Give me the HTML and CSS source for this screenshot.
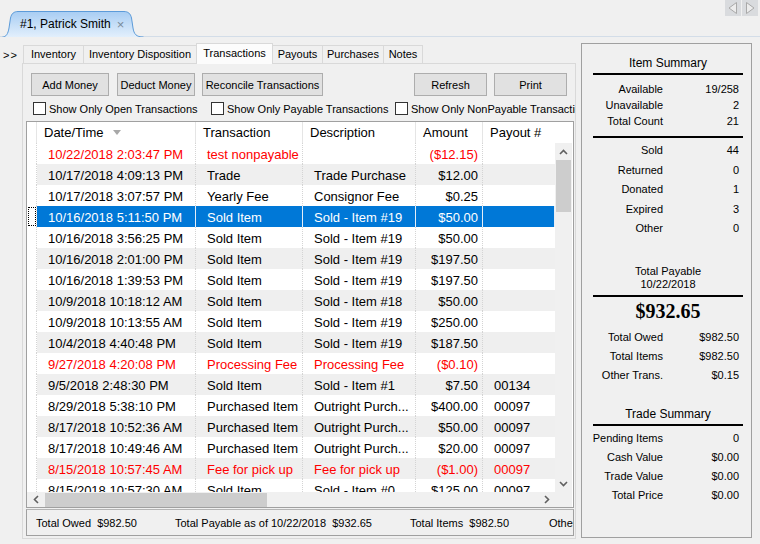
FILE: index.html
```html
<!DOCTYPE html>
<html lang="en">
<head>
    <meta charset="UTF-8">
    <meta name="viewport" content="width=device-width, initial-scale=1.0">
    <title>#1, Patrick Smith - Transactions</title>
    <link rel="stylesheet" href="styles.css">
</head>
<body>
    <div class="topbar">
        <div class="doc-tab">
            <svg class="doc-tab-bg" width="142" height="26" viewBox="0 0 142 26">
                <defs>
                    <linearGradient id="tabfill" x1="0" y1="0" x2="0" y2="1">
                        <stop offset="0" stop-color="#a8cdf3"/>
                        <stop offset="1" stop-color="#e2effc"/>
                    </linearGradient>
                </defs>
                <path d="M0.5 26 C4 26 6 23 7 17 L8.5 7 C9.5 2.5 12 0.5 16 0.5 L122 0.5 C126 0.5 128.5 2.5 129.5 7 L131 17 C132 23 134 26 141.5 26" fill="url(#tabfill)" stroke="#5c9bd9"/>
            </svg>
            <span class="doc-tab-label">#1, Patrick Smith</span>
            <span class="doc-tab-close">×</span>
        </div>
        <div class="nav-arrows">
            <span class="nav-btn">
                <svg width="16" height="16" viewBox="0 0 16 16"><path d="M11.5 2.5 L4 8 L11.5 13.5 Z" fill="#ececec" stroke="#a9a9a9"/></svg>
            </span>
            <span class="nav-btn">
                <svg width="16" height="16" viewBox="0 0 16 16"><path d="M4.5 2.5 L12 8 L4.5 13.5 Z" fill="#ececec" stroke="#a9a9a9"/></svg>
            </span>
        </div>
    </div>

    <div class="workspace">
        <div class="expander">&gt;&gt;</div>

        <div class="tabs">
            <div class="tab-strip">
                <span class="tab w-inv">Inventory</span>
                <span class="tab w-disp">Inventory Disposition</span>
                <span class="tab w-trans active">Transactions</span>
                <span class="tab w-payouts">Payouts</span>
                <span class="tab w-purch">Purchases</span>
                <span class="tab w-notes">Notes</span>
            </div>

            <div class="tab-page">
                <div class="toolbar">
                    <button class="btn w-add">Add Money</button>
                    <button class="btn w-deduct">Deduct Money</button>
                    <button class="btn w-reconcile">Reconcile Transactions</button>
                    <span class="spacer"></span>
                    <button class="btn w-refresh">Refresh</button>
                    <button class="btn w-print">Print</button>
                </div>

                <div class="filters">
                    <label class="check w-open"><span class="box"></span>Show Only Open Transactions</label>
                    <label class="check w-payable"><span class="box"></span>Show Only Payable Transactions</label>
                    <label class="check w-nonpayable"><span class="box"></span>Show Only NonPayable Transactions</label>
                </div>

                <div class="grid">
                    <div class="grid-head">
                        <div class="hc c-sel"></div>
                        <div class="hc c-date">Date/Time <span class="sort-arrow"></span></div>
                        <div class="hc c-type">Transaction</div>
                        <div class="hc c-desc">Description</div>
                        <div class="hc c-amt">Amount</div>
                        <div class="hc c-pay-head">Payout #</div>
                    </div>

                    <div class="grid-body">
                        <div class="rows">
                            <div class="row red">
                                <div class="c c-sel"></div>
                                <div class="c c-date">10/22/2018 2:03:47 PM</div>
                                <div class="c c-type">test nonpayable</div>
                                <div class="c c-desc"></div>
                                <div class="c c-amt">($12.15)</div>
                                <div class="c c-pay"></div>
                            </div>
                            <div class="row alt">
                                <div class="c c-sel"></div>
                                <div class="c c-date">10/17/2018 4:09:13 PM</div>
                                <div class="c c-type">Trade</div>
                                <div class="c c-desc">Trade Purchase</div>
                                <div class="c c-amt">$12.00</div>
                                <div class="c c-pay"></div>
                            </div>
                            <div class="row">
                                <div class="c c-sel"></div>
                                <div class="c c-date">10/17/2018 3:07:57 PM</div>
                                <div class="c c-type">Yearly Fee</div>
                                <div class="c c-desc">Consignor Fee</div>
                                <div class="c c-amt">$0.25</div>
                                <div class="c c-pay"></div>
                            </div>
                            <div class="row selected">
                                <div class="c c-sel"><span class="focus"></span></div>
                                <div class="c c-date">10/16/2018 5:11:50 PM</div>
                                <div class="c c-type">Sold Item</div>
                                <div class="c c-desc">Sold - Item #19</div>
                                <div class="c c-amt">$50.00</div>
                                <div class="c c-pay"></div>
                            </div>
                            <div class="row">
                                <div class="c c-sel"></div>
                                <div class="c c-date">10/16/2018 3:56:25 PM</div>
                                <div class="c c-type">Sold Item</div>
                                <div class="c c-desc">Sold - Item #19</div>
                                <div class="c c-amt">$50.00</div>
                                <div class="c c-pay"></div>
                            </div>
                            <div class="row alt">
                                <div class="c c-sel"></div>
                                <div class="c c-date">10/16/2018 2:01:00 PM</div>
                                <div class="c c-type">Sold Item</div>
                                <div class="c c-desc">Sold - Item #19</div>
                                <div class="c c-amt">$197.50</div>
                                <div class="c c-pay"></div>
                            </div>
                            <div class="row">
                                <div class="c c-sel"></div>
                                <div class="c c-date">10/16/2018 1:39:53 PM</div>
                                <div class="c c-type">Sold Item</div>
                                <div class="c c-desc">Sold - Item #19</div>
                                <div class="c c-amt">$197.50</div>
                                <div class="c c-pay"></div>
                            </div>
                            <div class="row alt">
                                <div class="c c-sel"></div>
                                <div class="c c-date">10/9/2018 10:18:12 AM</div>
                                <div class="c c-type">Sold Item</div>
                                <div class="c c-desc">Sold - Item #18</div>
                                <div class="c c-amt">$50.00</div>
                                <div class="c c-pay"></div>
                            </div>
                            <div class="row">
                                <div class="c c-sel"></div>
                                <div class="c c-date">10/9/2018 10:13:55 AM</div>
                                <div class="c c-type">Sold Item</div>
                                <div class="c c-desc">Sold - Item #19</div>
                                <div class="c c-amt">$250.00</div>
                                <div class="c c-pay"></div>
                            </div>
                            <div class="row alt">
                                <div class="c c-sel"></div>
                                <div class="c c-date">10/4/2018 4:40:48 PM</div>
                                <div class="c c-type">Sold Item</div>
                                <div class="c c-desc">Sold - Item #19</div>
                                <div class="c c-amt">$187.50</div>
                                <div class="c c-pay"></div>
                            </div>
                            <div class="row red">
                                <div class="c c-sel"></div>
                                <div class="c c-date">9/27/2018 4:20:08 PM</div>
                                <div class="c c-type">Processing Fee</div>
                                <div class="c c-desc">Processing Fee</div>
                                <div class="c c-amt">($0.10)</div>
                                <div class="c c-pay"></div>
                            </div>
                            <div class="row alt">
                                <div class="c c-sel"></div>
                                <div class="c c-date">9/5/2018 2:48:30 PM</div>
                                <div class="c c-type">Sold Item</div>
                                <div class="c c-desc">Sold - Item #1</div>
                                <div class="c c-amt">$7.50</div>
                                <div class="c c-pay">00134</div>
                            </div>
                            <div class="row">
                                <div class="c c-sel"></div>
                                <div class="c c-date">8/29/2018 5:38:10 PM</div>
                                <div class="c c-type">Purchased Item</div>
                                <div class="c c-desc">Outright Purch...</div>
                                <div class="c c-amt">$400.00</div>
                                <div class="c c-pay">00097</div>
                            </div>
                            <div class="row alt">
                                <div class="c c-sel"></div>
                                <div class="c c-date">8/17/2018 10:52:36 AM</div>
                                <div class="c c-type">Purchased Item</div>
                                <div class="c c-desc">Outright Purch...</div>
                                <div class="c c-amt">$50.00</div>
                                <div class="c c-pay">00097</div>
                            </div>
                            <div class="row">
                                <div class="c c-sel"></div>
                                <div class="c c-date">8/17/2018 10:49:46 AM</div>
                                <div class="c c-type">Purchased Item</div>
                                <div class="c c-desc">Outright Purch...</div>
                                <div class="c c-amt">$20.00</div>
                                <div class="c c-pay">00097</div>
                            </div>
                            <div class="row alt red">
                                <div class="c c-sel"></div>
                                <div class="c c-date">8/15/2018 10:57:45 AM</div>
                                <div class="c c-type">Fee for pick up</div>
                                <div class="c c-desc">Fee for pick up</div>
                                <div class="c c-amt">($1.00)</div>
                                <div class="c c-pay">00097</div>
                            </div>
                            <div class="row">
                                <div class="c c-sel"></div>
                                <div class="c c-date">8/15/2018 10:57:30 AM</div>
                                <div class="c c-type">Sold Item</div>
                                <div class="c c-desc">Sold - Item #0</div>
                                <div class="c c-amt">$125.00</div>
                                <div class="c c-pay">00097</div>
                            </div>
                        </div>

                        <div class="vscroll">
                            <span class="sb-arrow">
                                <svg width="9" height="6" viewBox="0 0 9 6"><polyline points="1,5 4.5,1.5 8,5" fill="none" stroke="#606060" stroke-width="1.6"/></svg>
                            </span>
                            <span class="vthumb"></span>
                            <span class="spacer"></span>
                            <span class="sb-arrow">
                                <svg width="9" height="6" viewBox="0 0 9 6"><polyline points="1,1 4.5,4.5 8,1" fill="none" stroke="#606060" stroke-width="1.6"/></svg>
                            </span>
                        </div>
                    </div>

                    <div class="grid-foot">
                        <div class="hscroll">
                            <span class="sb-arrow h">
                                <svg width="6" height="9" viewBox="0 0 6 9"><polyline points="5,1 1.5,4.5 5,8" fill="none" stroke="#606060" stroke-width="1.6"/></svg>
                            </span>
                            <span class="hthumb"></span>
                            <span class="spacer"></span>
                            <span class="sb-arrow h">
                                <svg width="6" height="9" viewBox="0 0 6 9"><polyline points="1,1 4.5,4.5 1,8" fill="none" stroke="#606060" stroke-width="1.6"/></svg>
                            </span>
                        </div>
                        <div class="corner"></div>
                    </div>
                </div>

                <div class="status">
                    <span class="st st-owed">Total Owed&nbsp;&nbsp;$982.50</span>
                    <span class="st st-payable">Total Payable as of 10/22/2018&nbsp;&nbsp;$932.65</span>
                    <span class="st st-items">Total Items&nbsp;&nbsp;$982.50</span>
                    <span class="st">Other Trans.&nbsp;&nbsp;$0.15</span>
                </div>
            </div>
        </div>

        <div class="summary">
            <div class="sum-title first">Item Summary</div>
            <div class="sum-rule"></div>
            <div class="sum-rows tight">
                <span>Available</span><span>19/258</span>
                <span>Unavailable</span><span>2</span>
                <span>Total Count</span><span>21</span>
            </div>
            <div class="sum-rule r-after-tight"></div>
            <div class="sum-rows loose">
                <span>Sold</span><span>44</span>
                <span>Returned</span><span>0</span>
                <span>Donated</span><span>1</span>
                <span>Expired</span><span>3</span>
                <span>Other</span><span>0</span>
            </div>
            <div class="sum-payable">Total Payable<br>10/22/2018</div>
            <div class="sum-rule r-after-payable"></div>
            <div class="sum-total">$932.65</div>
            <div class="sum-rows money">
                <span>Total Owed</span><span>$982.50</span>
                <span>Total Items</span><span>$982.50</span>
                <span>Other Trans.</span><span>$0.15</span>
            </div>
            <div class="sum-title trade">Trade Summary</div>
            <div class="sum-rule"></div>
            <div class="sum-rows trade-rows">
                <span>Pending Items</span><span>0</span>
                <span>Cash Value</span><span>$0.00</span>
                <span>Trade Value</span><span>$0.00</span>
                <span>Total Price</span><span>$0.00</span>
            </div>
        </div>
    </div>
</body>
</html>
```

FILE: styles.css
```css
* {
    box-sizing: border-box;
}
body {
    margin: 0;
    width: 760px;
    height: 544px;
    overflow: hidden;
    background: #f0f0f0;
    font-family: "Liberation Sans", Arial, sans-serif;
    font-size: 11px;
    color: #000;
}

/* document tab bar */
.topbar {
    height: 37px;
    display: flex;
    align-items: flex-end;
    justify-content: space-between;
    border-bottom: 1px solid #d3dde8;
}
.doc-tab {
    position: relative;
    width: 142px;
    height: 26px;
    margin-left: 2px;
    margin-bottom: -1px;
    display: flex;
    align-items: center;
}
.doc-tab-bg {
    position: absolute;
    left: 0;
    top: 0;
}
.doc-tab-label {
    position: relative;
    padding-left: 18px;
    font-size: 12px;
    color: #000;
}
.doc-tab-close {
    position: relative;
    margin-left: 6px;
    font-size: 13px;
    color: #7a8a9a;
}
.nav-arrows {
    align-self: flex-start;
    display: flex;
    gap: 1px;
    margin-right: 2px;
}
.nav-btn {
    width: 16px;
    height: 16px;
    background: #d9dbde;
    display: flex;
}

/* main area */
.workspace {
    display: flex;
    padding-top: 6px;
}
.expander {
    width: 22px;
    padding: 6px 0 0 3px;
    font-size: 11px;
    letter-spacing: 1px;
}
.tabs {
    width: 554px;
}
.tab-strip {
    height: 20px;
    display: flex;
    align-items: flex-end;
    padding-left: 1px;
}
.tab {
    height: 18px;
    line-height: 17px;
    text-align: center;
    white-space: nowrap;
    border: 1px solid #d9d9d9;
    border-bottom: none;
    margin-right: -1px;
    background: #f0f0f0;
}
.w-inv { width: 61px; }
.w-disp { width: 114px; }
.w-trans { width: 77px; }
.w-payouts { width: 51px; }
.w-purch { width: 62px; }
.w-notes { width: 40px; }
.tab.active {
    position: relative;
    height: 21px;
    margin-bottom: -1px;
    line-height: 18px;
    background: #fcfcfc;
    border-color: #d9d9d9;
    z-index: 1;
}
.tab-page {
    height: 476px;
    border: 1px solid #d9d9d9;
    background: #f0f0f0;
}

.toolbar {
    display: flex;
    gap: 8px;
    margin-top: 9px;
    padding: 0 8px 0 8px;
}
.spacer {
    flex: 1;
}
.btn {
    height: 23px;
    padding: 0;
    border: 1px solid #adadad;
    background: #e1e1e1;
    font-family: "Liberation Sans", Arial, sans-serif;
    font-size: 11px;
    color: #000;
}
.w-add { width: 78px; }
.w-deduct { width: 78px; }
.w-reconcile { width: 121px; margin-left: -1px; }
.w-refresh { width: 73px; }
.w-print { width: 73px; margin-left: -1px; }

.filters {
    display: flex;
    margin-top: 6px;
    padding-left: 10px;
    height: 13px;
    white-space: nowrap;
    overflow: hidden;
}
.check {
    display: flex;
    align-items: center;
    flex-shrink: 0;
}
.w-open { width: 178px; }
.w-payable { width: 184px; }
.box {
    width: 13px;
    height: 13px;
    border: 1px solid #333;
    background: #fff;
    margin-right: 3px;
}

/* data grid */
.grid {
    margin: 6px 0 0 3px;
    width: 548px;
    border: 1px solid #a0a0a0;
    background: #fff;
    font-size: 13px;
}
.grid-head {
    display: flex;
    height: 21px;
    line-height: 22px;
    background: #fff;
}
.hc {
    padding-left: 7px;
    border-right: 1px solid #e5e5e5;
    white-space: nowrap;
}
.hc.c-sel {
    padding: 0;
}
.c-pay-head {
    flex: 1;
    border-right: none;
}
.sort-arrow {
    display: inline-block;
    margin-left: 6px;
    vertical-align: 2px;
    border-left: 4px solid transparent;
    border-right: 4px solid transparent;
    border-top: 5px solid #a8a8a8;
}
.c-sel { width: 10px; }
.c-date { width: 159px; }
.c-type { width: 107px; }
.c-desc { width: 113px; }
.c-amt { width: 67px; }
.c-pay { width: 72px; }

.grid-body {
    display: flex;
    height: 349px;
}
.rows {
    width: 528px;
    overflow: hidden;
}
.row {
    display: flex;
    height: 21px;
    line-height: 23px;
}
.c {
    padding-left: 11px;
    border-right: 1px dotted #d4d4d4;
    white-space: nowrap;
    overflow: hidden;
}
.c.c-sel {
    padding: 0;
    background: #fff;
    position: relative;
}
.c.c-amt {
    padding: 0 4px 0 0;
    text-align: right;
}
.c.c-pay {
    border-right: none;
}
.row.alt .c {
    background: #efefef;
}
.row.alt .c.c-sel {
    background: #fff;
}
.row.red {
    color: #ff0000;
}
.row.selected .c {
    background: #0078d7;
    color: #fff;
    border-right: 1px solid #e6eef7;
}
.row.selected .c.c-sel {
    background: #fff;
    border-right: 1px dotted #d4d4d4;
}
.focus {
    position: absolute;
    left: 1px;
    top: 1px;
    width: 8px;
    height: 19px;
    border: 1px dotted #000;
}

.vscroll {
    width: 17px;
    background: #f0f0f0;
    display: flex;
    flex-direction: column;
    align-items: center;
}
.sb-arrow {
    width: 17px;
    height: 17px;
    display: flex;
    align-items: center;
    justify-content: center;
    flex-shrink: 0;
}
.vthumb {
    width: 15px;
    height: 52px;
    background: #cdcdcd;
}
.grid-foot {
    display: flex;
    height: 15px;
}
.hscroll {
    width: 528px;
    display: flex;
    align-items: center;
    background: #f0f0f0;
}
.sb-arrow.h {
    height: 15px;
}
.hthumb {
    width: 222px;
    height: 14px;
    margin-left: 1px;
    background: #cdcdcd;
}
.corner {
    width: 17px;
    background: #f0f0f0;
}

.status {
    margin: 1px 0 0 3px;
    width: 548px;
    height: 27px;
    border: 1px solid #a0a0a0;
    border-top-color: #b4b4b4;
    display: flex;
    align-items: center;
    padding-left: 9px;
    white-space: nowrap;
    overflow: hidden;
}
.st {
    flex-shrink: 0;
}
.st-owed { width: 139px; }
.st-payable { width: 235px; }
.st-items { width: 139px; }

/* right summary panel */
.summary {
    width: 171px;
    height: 495px;
    margin-left: 5px;
    border: 1px solid #a0a0a0;
    background: #f0f0f0;
}
.sum-title {
    text-align: center;
    font-size: 12px;
    line-height: 16px;
    padding-left: 3px;
}
.sum-title.first {
    margin-top: 11px;
}
.sum-title.trade {
    margin-top: 21px;
}
.sum-rule {
    height: 2px;
    margin: 2px 8px 0 11px;
    background: #000;
}
.sum-rule.r-after-tight {
    margin-top: 7px;
}
.sum-rule.r-after-payable {
    margin-top: 4px;
}
.sum-rows {
    display: grid;
    grid-template-columns: 81px 76px;
    text-align: right;
}
.sum-rows.tight {
    margin-top: 6px;
    line-height: 16px;
}
.sum-rows.loose {
    margin-top: 3px;
    line-height: 19.5px;
}
.sum-rows.money {
    margin-top: 5px;
    line-height: 19px;
}
.sum-rows.trade-rows {
    margin-top: 3px;
    line-height: 19px;
}
.sum-payable {
    margin-top: 26px;
    text-align: center;
    line-height: 13px;
    padding-left: 3px;
}
.sum-total {
    margin-top: 2px;
    text-align: center;
    font-family: "Liberation Serif", "Times New Roman", serif;
    font-weight: bold;
    font-size: 20px;
    line-height: 24px;
    padding-left: 3px;
}
```
